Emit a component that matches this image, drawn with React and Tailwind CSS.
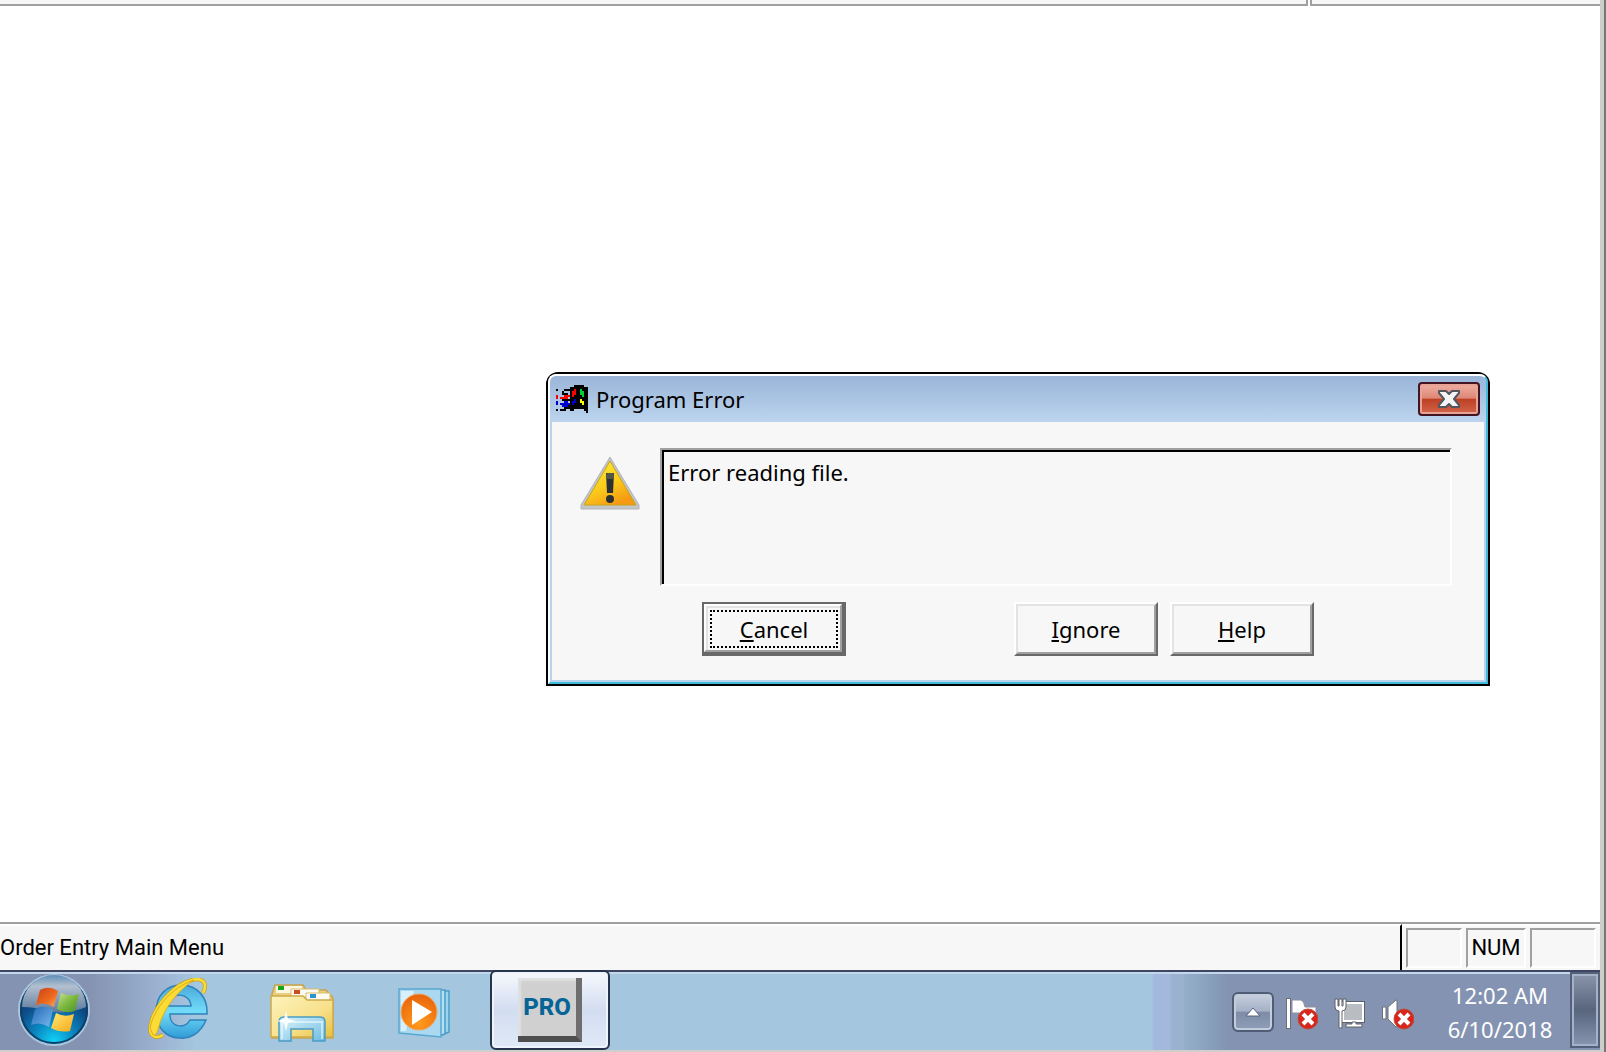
import React from "react";

function StartOrb() {
  return (
    <svg viewBox="0 0 72 72" className="size-[72px]" aria-hidden="true">
      <defs>
        <radialGradient id="orb" cx="50%" cy="95%" r="85%">
          <stop offset="0" stopColor="#12d4f8" />
          <stop offset="0.35" stopColor="#0a86c0" />
          <stop offset="0.7" stopColor="#0d4a86" />
          <stop offset="1" stopColor="#0c3760" />
        </radialGradient>
        <linearGradient id="orbShine" x1="0" y1="0" x2="0" y2="1">
          <stop offset="0" stopColor="#5f8fb8" />
          <stop offset="0.3" stopColor="#b3bfcf" />
          <stop offset="1" stopColor="#5c7a9c" />
        </linearGradient>
        <linearGradient id="fRed" x1="0" y1="0" x2="1" y2="1">
          <stop offset="0" stopColor="#c8401a" />
          <stop offset="0.6" stopColor="#ee6a1c" />
          <stop offset="1" stopColor="#f9b070" />
        </linearGradient>
        <linearGradient id="fGreen" x1="0" y1="0" x2="1" y2="1">
          <stop offset="0" stopColor="#c9e39a" />
          <stop offset="0.5" stopColor="#7cb83e" />
          <stop offset="1" stopColor="#4b8f2e" />
        </linearGradient>
        <linearGradient id="fBlue" x1="0" y1="0" x2="1" y2="1">
          <stop offset="0" stopColor="#2468b4" />
          <stop offset="1" stopColor="#78baf0" />
        </linearGradient>
        <linearGradient id="fYellow" x1="0" y1="0" x2="1" y2="1">
          <stop offset="0" stopColor="#ffe873" />
          <stop offset="1" stopColor="#f7a81a" />
        </linearGradient>
      </defs>
      <circle cx="36" cy="36" r="35" fill="url(#orb)" stroke="#a9c6de" strokeWidth="2" />
      <circle cx="36" cy="36" r="33" fill="none" stroke="#123f68" strokeWidth="2" />
      <path d="M4 33 A32 32 0 0 1 68 33 Q52 40 36 38 Q18 33 4 33Z" fill="url(#orbShine)" />
      <path d="M22 16 Q31 11 40 17 L36 33 Q27 27 18 31Z" fill="url(#fRed)" />
      <path d="M43 19 Q52 23 61 20 L57 37 Q48 40 39 35Z" fill="url(#fGreen)" />
      <path d="M17 35 Q26 30 35 36 L31 53 Q22 47 13 51Z" fill="url(#fBlue)" />
      <path d="M38 39 Q47 44 56 40 L52 57 Q42 59 33 54Z" fill="url(#fYellow)" />
    </svg>
  );
}

function ExplorerBrowser() {
  return (
    <svg viewBox="0 0 60 62" className="h-[62px] w-[60px]" aria-hidden="true">
      <defs>
        <linearGradient id="ieBlue" x1="0" y1="0" x2="0" y2="1">
          <stop offset="0" stopColor="#4aa9dc" />
          <stop offset="0.5" stopColor="#72dcf8" />
          <stop offset="1" stopColor="#2f9bd6" />
        </linearGradient>
      </defs>
      <path
        fillRule="evenodd"
        fill="url(#ieBlue)"
        stroke="#2f82ba"
        strokeWidth="1.5"
        d="M59 36 L22 36 C21 49 37 52 42 42 L58 42 C52 57 40 61 32 60 C18 60 8 49 8 34 C8 17 19 7 33 7 C49 7 60 19 59 36Z M20 28 L43 28 C42 14 22 13 20 28Z"
      />
      <path
        d="M15 57 C6 62 0 57 3 45 C7 28 25 7 44 2 C55 -1 60 5 55 15"
        fill="none"
        stroke="#c8a31a"
        strokeWidth="4"
      />
      <path
        d="M15 57 C6 62 0 57 3 45 C7 28 25 7 44 2 C55 -1 60 5 55 15"
        fill="none"
        stroke="#fbdc35"
        strokeWidth="2.5"
      />
      <path d="M2 50 C6 30 24 9 46 2 C32 11 15 29 10 52 Q8 58 5 57Z" fill="#fbdc35" stroke="#dcae1c" strokeWidth="1" />
    </svg>
  );
}

function FolderIcon() {
  return (
    <svg viewBox="0 0 64 60" className="h-[60px] w-16" aria-hidden="true">
      <defs>
        <linearGradient id="folder" x1="0" y1="0" x2="1" y2="1">
          <stop offset="0" stopColor="#fdf3bd" />
          <stop offset="0.6" stopColor="#f8e08a" />
          <stop offset="1" stopColor="#e9bf3c" />
        </linearGradient>
        <linearGradient id="stand" x1="0" y1="0" x2="1" y2="1">
          <stop offset="0" stopColor="#dff5fd" />
          <stop offset="1" stopColor="#6dbbe0" />
        </linearGradient>
      </defs>
      <path d="M2 10 L5 1 L33 1 L36 6 L56 6 L63 14 V54 H2Z" fill="#e9cf7e" stroke="#c6a550" strokeWidth="1.5" />
      <rect x="6" y="2" width="26" height="7" fill="#fbf6e2" />
      <rect x="8" y="2" width="6" height="4" fill="#17a51d" />
      <path d="M21 5 H49 V13 H21Z" fill="#fdfaf0" stroke="#d9bd6c" />
      <rect x="24" y="6" width="6" height="4" fill="#cf4a22" />
      <path d="M36 9 H60 V17 H36Z" fill="#fdfaf0" stroke="#d9bd6c" />
      <rect x="40" y="10" width="6" height="4" fill="#2c93d0" />
      <path d="M1 12 H33 L37 16 H63 V53 H1Z" fill="url(#folder)" stroke="#cdaa4c" strokeWidth="1.5" />
      <path
        d="M9 57 V38 Q9 33 14 33 H50 Q55 33 55 38 V57 H43 V45 H21 V57Z"
        fill="url(#stand)"
        stroke="#4a9cc4"
        strokeWidth="1.5"
      />
      <path d="M12 55 V38 H52 V55" fill="none" stroke="#e9fbff" strokeWidth="1.5" opacity="0.8" />
      <path d="M16 27 L18 35 L26 37 L18 39 L16 47 L14 39 L7 37 L14 35Z" fill="#ffffff" opacity="0.9" />
    </svg>
  );
}

function MediaPlayerIcon() {
  return (
    <svg viewBox="0 0 52 50" className="h-[50px] w-[52px]" aria-hidden="true">
      <defs>
        <radialGradient id="wmp" cx="50%" cy="80%" r="80%">
          <stop offset="0" stopColor="#ff9c1c" />
          <stop offset="1" stopColor="#e8640c" />
        </radialGradient>
      </defs>
      <path d="M46 3 H51 V44 L44 47Z" fill="#9fd4ee" stroke="#4a9cc8" strokeWidth="1.5" />
      <path d="M42 2 H47 V46 L40 48Z" fill="#b4e0f4" stroke="#4a9cc8" strokeWidth="1.5" />
      <path d="M1 1 H43 V49 L1 45Z" fill="#a9d8f0" stroke="#5aa8d0" strokeWidth="1.5" />
      <path d="M3 3 H16 L8 43 L3 43Z" fill="#e4f6fd" opacity="0.8" />
      <circle cx="21" cy="24" r="18" fill="url(#wmp)" stroke="#f4a660" strokeWidth="1" />
      <path d="M14 12 L34 24 L14 37Z" fill="#ffffff" />
    </svg>
  );
}

function WinFlagIcon() {
  return (
    <svg viewBox="0 0 16 14" className="h-7 w-8" shapeRendering="crispEdges" aria-hidden="true">
      <path d="M7 1 H9 V0 H14 V1 H16 V14 H15 V13 H14 V12 H9 V13 H7 V12 H6 V10 H7Z" fill="#000" />
      <path d="M9 2 H10 V5 H9 V6 H8 V3 H9Z" fill="#f00" />
      <path d="M12 2 H13 V3 H14 V6 H13 V5 H12Z" fill="#00d030" />
      <path d="M9 7 H10 V9 H9 V10 H8 V8 H9Z" fill="#00c" />
      <path d="M12 7 H13 V8 H14 V10 H13 V9 H12Z" fill="#ff0" />
      <path d="M0 2h1v1H0z M3 3h1v1H3z M4 2h3v1H4z M3 4h3v1H3z M3 7h4v1H3z M2 12h3v1H2z M4 11h3v1H4z M0 12h1v1H0z" fill="#000" />
      <path d="M0 5h1v2H0z M2 6h4v1H2z M4 5h3v1H4z" fill="#f00" />
      <path d="M0 8h1v2H0z M2 9h5v1H2z M4 8h2v1H4z M3 10h3v1H3z" fill="#00c" />
    </svg>
  );
}

function WarningIcon() {
  return (
    <svg viewBox="0 0 60 54" className="h-[54px] w-[60px]" aria-hidden="true">
      <defs>
        <linearGradient id="warn" x1="0" y1="0" x2="0.6" y2="1">
          <stop offset="0" stopColor="#fdf03c" />
          <stop offset="0.6" stopColor="#fbcb1c" />
          <stop offset="1" stopColor="#f59a12" />
        </linearGradient>
      </defs>
      <path d="M30 1 L59 49 V53 H1 V49Z" fill="#c3c5c9" stroke="#b2b4b8" strokeWidth="1" strokeLinejoin="round" />
      <path d="M30 5 L56 49 H4Z" fill="url(#warn)" stroke="#c9a417" strokeWidth="1" />
      <path d="M26 17 H34 L33 37 H27Z" fill="#2c2f33" />
      <rect x="26" y="17" width="8" height="6" rx="2" fill="#55564a" />
      <circle cx="30" cy="43" r="4" fill="#2c2f33" />
    </svg>
  );
}

function ErrorBadge() {
  return (
    <g>
      <circle cx="22" cy="21" r="10" fill="#d8261c" stroke="#b5503f" strokeWidth="1" />
      <path d="M17 16 L27 26 M27 16 L17 26" stroke="#ffffff" strokeWidth="4" />
    </g>
  );
}

function ActionFlagIcon() {
  return (
    <svg viewBox="0 0 32 32" className="size-8" aria-hidden="true">
      <rect x="0.5" y="0.5" width="4" height="30" fill="#ffffff" stroke="#6b6f78" />
      <path d="M6 2 H15 Q18 3 19 9 H30 V18 H18 L16 15 H6Z" fill="#ffffff" stroke="#8a8f9c" />
      <ErrorBadge />
    </svg>
  );
}

function NetworkIcon() {
  return (
    <svg viewBox="0 0 32 32" className="size-8" aria-hidden="true">
      <rect x="9" y="5" width="20" height="18" fill="#c0c2c6" stroke="#5c6068" strokeWidth="4" />
      <rect x="9" y="5" width="20" height="18" fill="#b9bcc0" stroke="#ffffff" strokeWidth="2" />
      <path d="M12 29 H28 V26 H22 V24 H18 V26 H12Z" fill="#ffffff" stroke="#5c6068" strokeWidth="1" />
      <path d="M1 1 V9 Q1 13 5 13 V30 H8 V13 Q12 13 12 9 V1 H9 V8 H8 V1 H5 V8 H4 V1Z" fill="#ffffff" stroke="#5c6068" strokeWidth="1" />
    </svg>
  );
}

function SpeakerIcon() {
  return (
    <svg viewBox="0 0 32 32" className="size-8" aria-hidden="true">
      <path d="M0.5 9 H4 V21 H0.5Z" fill="#ffffff" stroke="#6b6f78" />
      <path d="M6 9 L14 2 H15 V29 H14 L6 21Z" fill="#ffffff" stroke="#6b6f78" />
      <ErrorBadge />
    </svg>
  );
}

function CloseGlyph() {
  return (
    <svg viewBox="0 0 22 18" className="h-[18px] w-[22px]" aria-hidden="true">
      <path
        d="M1 1 H8 L11 4 L14 1 H21 V3 L16 9 L21 15 V17 H14 L11 14 L8 17 H1 V15 L6 9 L1 3Z"
        fill="#f4f4f4"
        stroke="#55555f"
        strokeWidth="2"
        strokeLinejoin="round"
      />
    </svg>
  );
}

function DialogButton({ hotkey, rest, focused }) {
  return (
    <button
      type="button"
      className={
        focused
          ? "h-[54px] w-36 border-2 border-r-4 border-b-4 border-[#696969] bg-[#f7f7f7] text-[22px] leading-8"
          : "h-[54px] w-36 border-2 border-t-white border-l-white border-r-[#696969] border-b-[#696969] bg-[#f7f7f7] text-[22px] leading-8"
      }
    >
      <span
        className={
          focused
            ? "flex h-full border-2 border-t-white border-l-white border-r-[#a0a0a0] border-b-[#a0a0a0] pt-1 pr-0.5 pb-0.5 pl-1 shadow-[inset_2px_2px_0_0_#e3e3e3]"
            : "flex h-full border-2 border-t-[#e3e3e3] border-l-[#e3e3e3] border-r-[#a0a0a0] border-b-[#a0a0a0]"
        }
      >
        <span
          className={
            focused
              ? "flex h-full w-full items-center justify-center border-2 border-dotted border-black"
              : "flex h-full w-full items-center justify-center"
          }
        >
          <span className="underline decoration-2 underline-offset-2">{hotkey}</span>
          {rest}
        </span>
      </span>
    </button>
  );
}

function ProgramErrorDialog() {
  return (
    <section
      role="dialog"
      aria-labelledby="dlg-title"
      className="absolute right-[110px] bottom-[236px] w-[944px] rounded-t-xl border-2 border-black bg-[#f7f7f7]"
    >
      <div className="rounded-t-lg border-2 border-t-white border-l-white border-r-[#40bcd8] border-b-[#40bcd8]">
        <header className="flex h-[46px] items-center rounded-t-md bg-linear-to-b from-[#9ab5d8] to-[#bcd4ee] px-1.5">
          <WinFlagIcon />
          <h1 id="dlg-title" className="ml-2 flex-1 text-[22px] leading-8">Program Error</h1>
          <button
            type="button"
            aria-label="Close"
            className="flex h-[34px] w-[62px] items-center justify-center rounded-sm border-2 border-[#431422] bg-[linear-gradient(180deg,#eeb0a4_0%,#dd8674_48%,#bd3f22_49%,#d2664a_100%)] shadow-[inset_0_0_0_2px_#e8a396]"
          >
            <CloseGlyph />
          </button>
        </header>
        <div className="border-x-2 border-b-2 border-[#b9d3ec] pt-[26px] pb-6">
          <div className="flex items-start pr-8 pl-7">
            <div className="pt-2">
              <WarningIcon />
            </div>
            <div className="ml-5 flex-1 border-2 border-t-[#a0a0a0] border-l-[#a0a0a0] border-r-white border-b-white">
              <p className="h-[134px] border-t-2 border-l-2 border-black pt-1 pl-1 text-[22px] leading-8">
                Error reading file.
              </p>
            </div>
          </div>
          <div className="mt-4 flex pl-[150px]">
            <DialogButton hotkey="C" rest="ancel" focused />
            <div className="ml-[168px] flex gap-3">
              <DialogButton hotkey="I" rest="gnore" />
              <DialogButton hotkey="H" rest="elp" />
            </div>
          </div>
        </div>
      </div>
    </section>
  );
}

function StatusBar() {
  return (
    <footer className="flex h-12 border-t-2 border-[#a0a0a0] bg-[#f7f7f7] font-['Roboto',sans-serif] text-[22px] leading-8">
      <div className="flex flex-1 items-center border-t-2 border-r-2 border-t-white border-r-black">
        Order Entry Main Menu
      </div>
      <div className="flex items-start gap-1 border-t-2 border-white pt-0.5 pr-1 pl-1">
        <div className="h-10 w-14 border-2 border-t-[#a0a0a0] border-l-[#a0a0a0] border-r-white border-b-white" />
        <div className="flex h-10 w-[60px] items-center justify-center border-2 border-t-[#a0a0a0] border-l-[#a0a0a0] border-r-white border-b-white">
          NUM
        </div>
        <div className="h-10 w-[66px] border-2 border-t-[#a0a0a0] border-l-[#a0a0a0] border-r-white border-b-white" />
      </div>
    </footer>
  );
}

function Taskbar() {
  return (
    <nav
      aria-label="Taskbar"
      className="flex h-20 items-stretch border-t-2 border-[#3f4661] bg-[linear-gradient(90deg,#8593b2_0,#8593b2_90px,#8ea3c0_125px,#9bb0d0_155px,#a4c6df_195px,#a4c6df_1152px,#a2b8dc_1154px,#a2b8dc_1170px,#9bb1d0_1172px,#9bb1d0_1183px,#93adca_1185px,#8ea6c2_1200px,#869cb8_1215px,#8593b2_1228px)] shadow-[inset_0_2px_0_0_#c3d7ec]"
    >
      <button type="button" aria-label="Start" className="ml-[18px] flex w-[72px] items-start pt-0.5">
        <StartOrb />
      </button>
      <button type="button" aria-label="Internet Explorer" className="ml-[58px] flex w-[60px] items-start pt-1.5">
        <ExplorerBrowser />
      </button>
      <button type="button" aria-label="Windows Explorer" className="ml-[62px] flex w-16 items-start pt-3">
        <FolderIcon />
      </button>
      <button type="button" aria-label="Windows Media Player" className="ml-16 flex w-[52px] items-start pt-4">
        <MediaPlayerIcon />
      </button>
      <button
        type="button"
        className="-mt-0.5 ml-10 flex w-[120px] justify-center rounded-md border-2 border-[#27344c] bg-linear-to-b from-[#f6f9fd] via-[#d3ddf1] to-[#dfe9f6] pt-1.5 shadow-[inset_0_0_0_2px_#eef4fb]"
      >
        <span className="flex size-16 items-center justify-center border-r-6 border-b-6 border-r-[#6e6e6e] border-b-[#4e4e4e] bg-[#d0d0d0] font-['Roboto',sans-serif] text-[24px] leading-8 font-extrabold text-[#066596] shadow-[inset_3px_3px_2px_0_#e0e0e0]">
          PRO
        </span>
      </button>
      <div className="flex flex-1 justify-end">
        <button
          type="button"
          aria-label="Show hidden icons"
          className="mt-5 flex h-10 w-[42px] items-center justify-center rounded-md border-2 border-[#4f5d76] bg-[linear-gradient(180deg,#c8d0df_0%,#a3b0c6_48%,#7d8ba6_50%,#909fb9_100%)] shadow-[inset_0_0_0_2px_#c3ccdb]"
        >
          <svg viewBox="0 0 16 10" className="h-2.5 w-4" aria-hidden="true">
            <path d="M8 1 L15 9 H1Z" fill="#ffffff" stroke="#59657c" strokeWidth="1" />
          </svg>
        </button>
        <div className="mt-[26px] ml-3 flex gap-4">
          <ActionFlagIcon />
          <NetworkIcon />
          <SpeakerIcon />
        </div>
        <time className="mt-1.5 ml-4 w-[140px] text-center text-[22px] leading-[34px] text-white">
          <span className="block">12:02 AM</span>
          <span className="block">6/10/2018</span>
        </time>
        <button
          type="button"
          aria-label="Show desktop"
          className="mb-0.5 w-[30px] border-2 border-[#55617a] bg-linear-to-b from-[#8b96ab] via-[#58657d] to-[#8896b2] shadow-[inset_0_0_0_2px_#a5b1c6]"
        />
      </div>
    </nav>
  );
}

export default function App() {
  return (
    <div className="flex h-screen bg-white font-['Noto_Sans',sans-serif] text-black">
      <div className="flex min-w-0 flex-1 flex-col border-b-2 border-[#cfcfcb]">
        <div className="flex h-1.5 gap-0.5">
          <div className="flex-1 border-r-2 border-b-2 border-[#a0a0a0] bg-[#f7f7f7]" />
          <div className="w-[290px] border-b-2 border-l-2 border-[#a0a0a0] bg-[#f7f7f7]" />
        </div>
        <main className="relative flex-1 bg-white">
          <ProgramErrorDialog />
        </main>
        <StatusBar />
        <Taskbar />
      </div>
      <div className="w-1.5 border-l-4 border-[#cdcdc9] bg-[#777775]" />
    </div>
  );
}
